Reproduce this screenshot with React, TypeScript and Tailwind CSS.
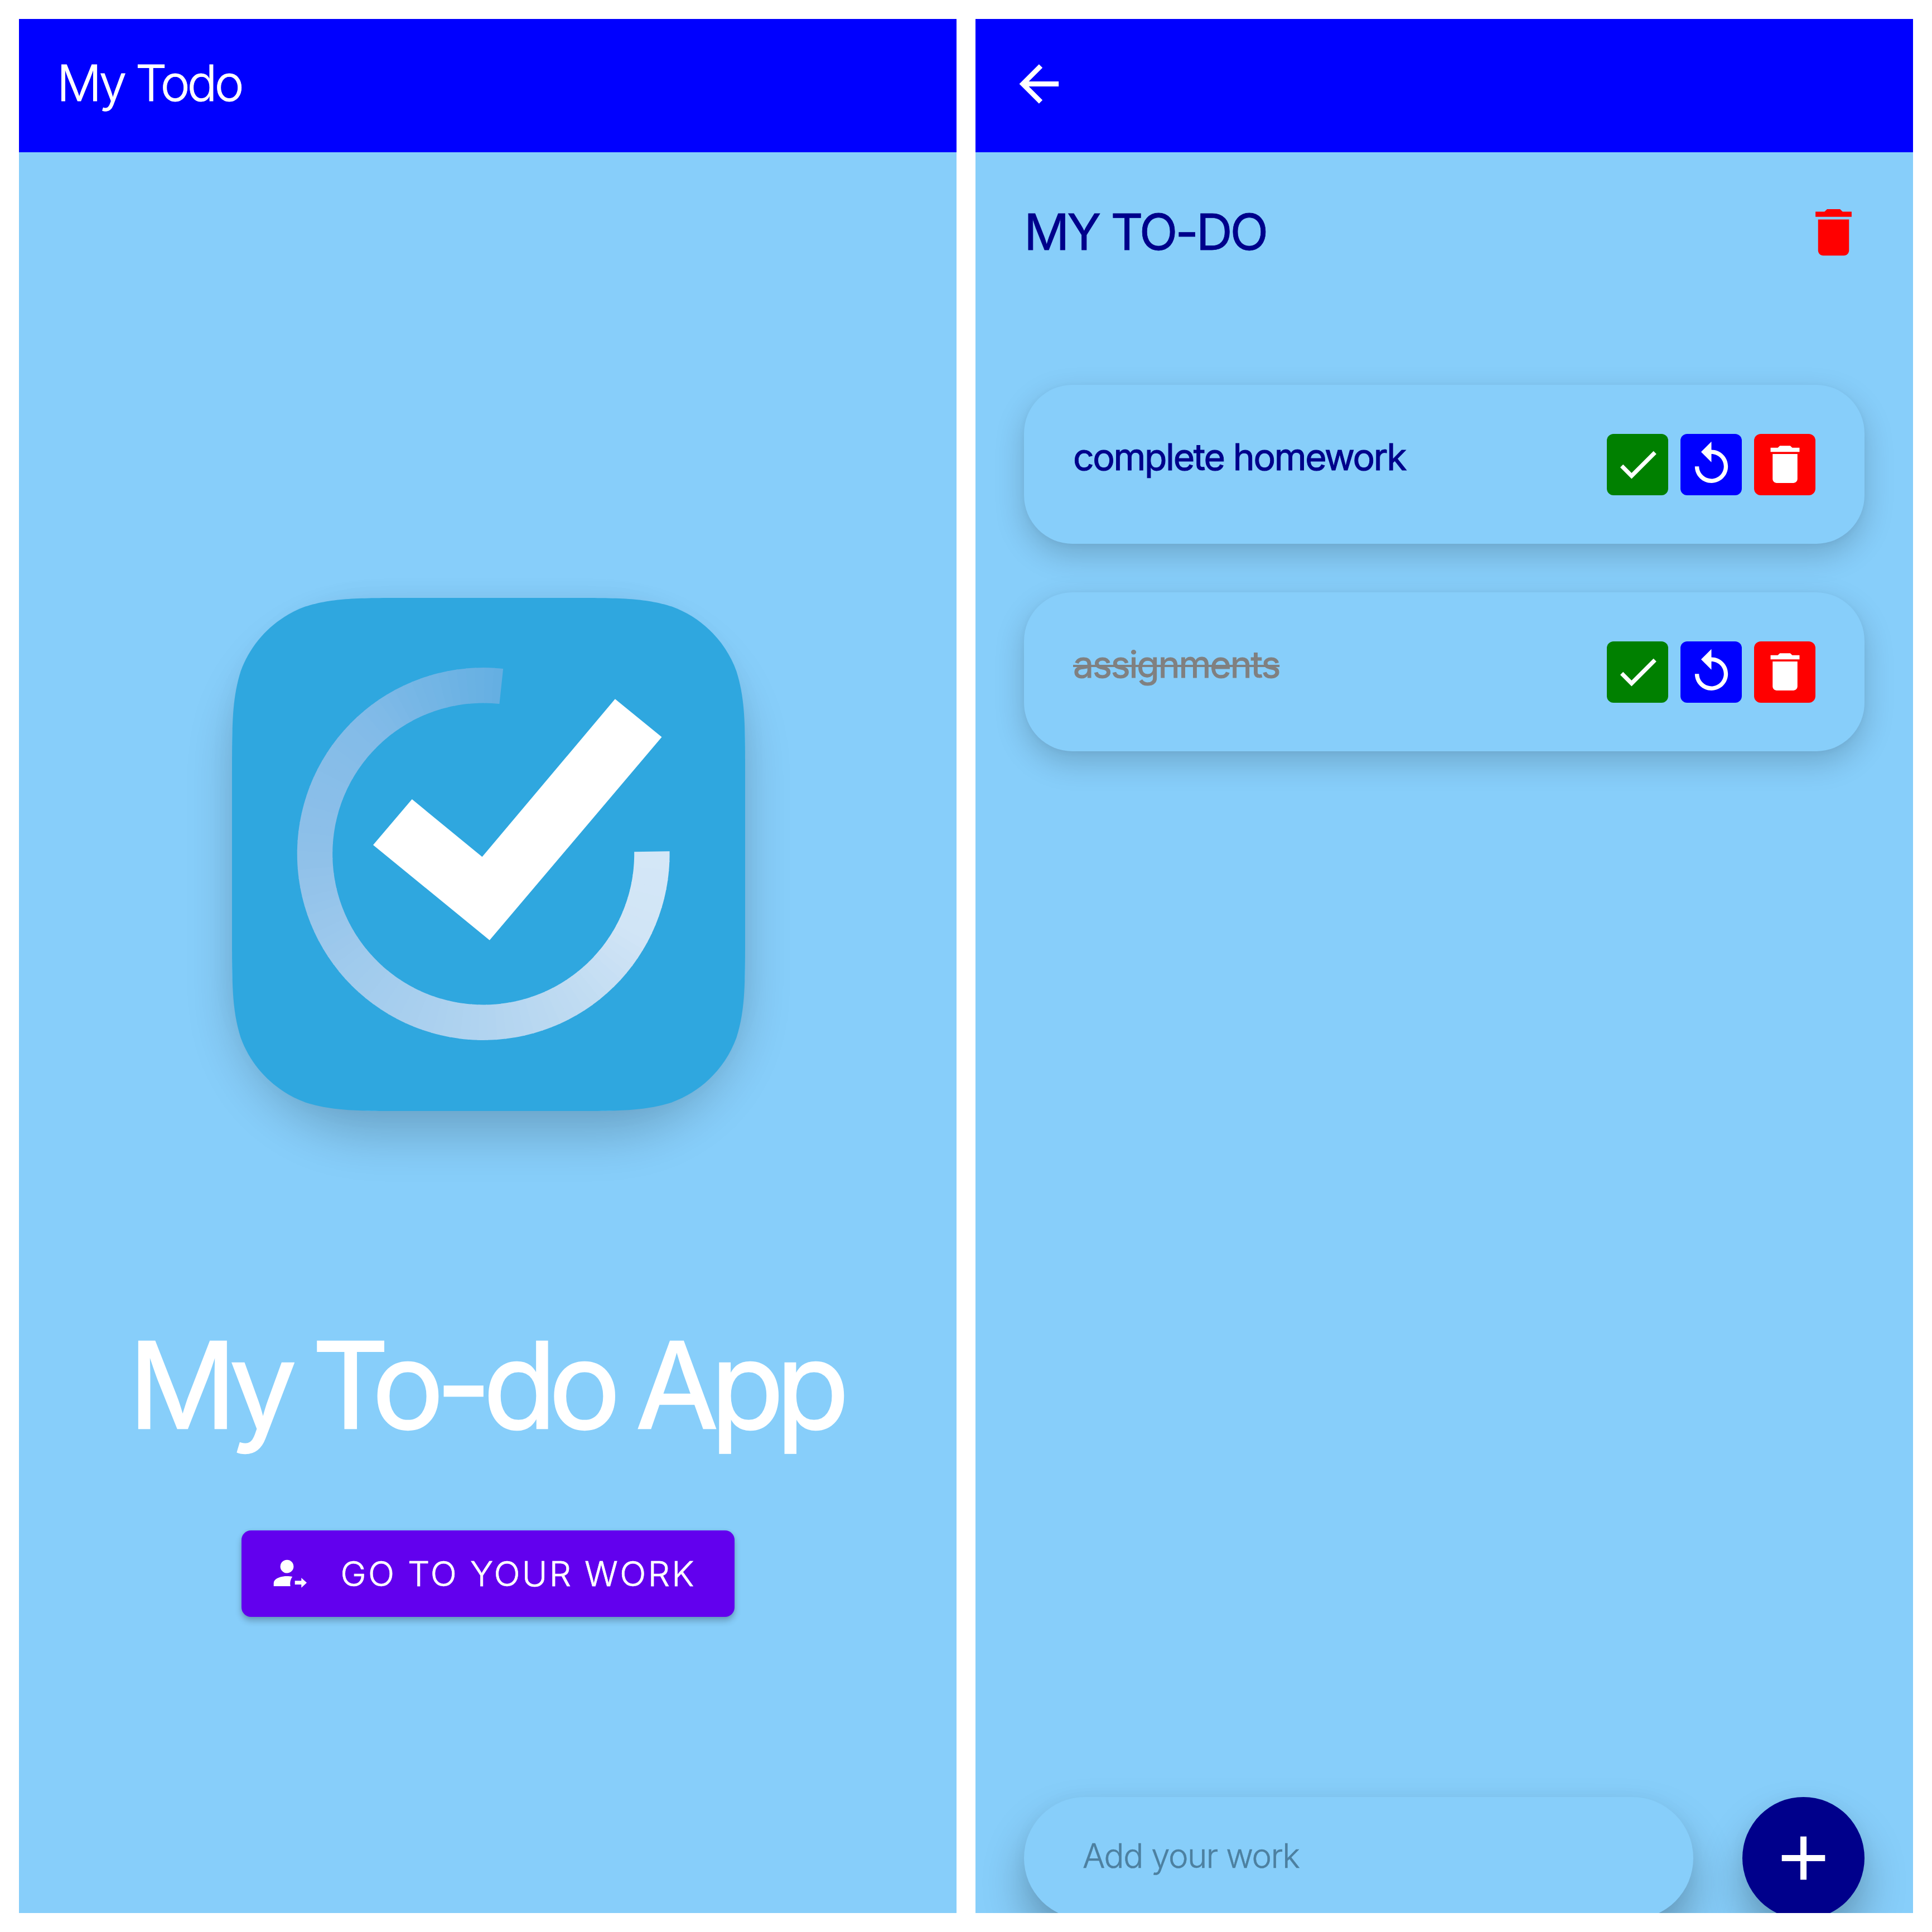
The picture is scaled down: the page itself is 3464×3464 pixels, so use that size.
import type { ReactNode } from "react";

const STOPS: [number, number[]][] = [
  [0, [212, 231, 247]],
  [0.1, [209, 229, 246]],
  [0.2, [193, 220, 242]],
  [0.32, [178, 212, 240]],
  [0.5, [161, 203, 237]],
  [0.66, [142, 192, 233]],
  [0.83, [130, 187, 232]],
  [1, [100, 175, 226]],
];

function colorAt(t: number) {
  const i = Math.max(1, STOPS.findIndex(([s]) => s >= t));
  const [t0, a] = STOPS[i - 1];
  const [t1, b] = STOPS[i];
  const k = (t - t0) / (t1 - t0);
  return `rgb(${a.map((v, n) => Math.round(v + (b[n] - v) * k)).join(",")})`;
}

/** Progress ring drawn clockwise from three o'clock, fading along the way. */
function Ring({ cx, cy, r, width }: { cx: number; cy: number; r: number; width: number }) {
  const from = -0.8;
  const to = 276.1;
  const count = 96;
  const step = (to - from) / count;
  const point = (deg: number) => {
    const a = (deg * Math.PI) / 180;
    return `${(cx + r * Math.cos(a)).toFixed(2)} ${(cy + r * Math.sin(a)).toFixed(2)}`;
  };
  return (
    <g fill="none" strokeWidth={width}>
      {Array.from({ length: count }, (_, i) => {
        const a = from + i * step;
        const b = Math.min(to, a + step + 0.4);
        return <path key={i} d={`M${point(a)}A${r} ${r} 0 0 1 ${point(b)}`} stroke={colorAt((i + 0.5) / count)} />;
      })}
    </g>
  );
}

function Logo() {
  return (
    <div className="ml-[3px] h-[920px] w-[920px] rounded-[255px] shadow-[0_46px_84px_rgba(0,0,0,0.18),0_0_50px_rgba(0,0,0,0.04)]">
      <svg viewBox="0 0 920 920" className="block h-full w-full">
        <path
          fill="#2fa7df"
          d="M318 0H602C694 0 739 0 788.6 15.6C842.4 35.2 884.8 77.6 904.4 131.4C920 181 920 226 920 318V602C920 694 920 739 904.4 788.6C884.8 842.4 842.4 884.8 788.6 904.4C739 920 694 920 602 920H318C226 920 181 920 131.4 904.4C77.6 884.8 35.2 842.4 15.6 788.6C0 739 0 694 0 602V318C0 226 0 181 15.6 131.4C35.2 77.6 77.6 35.2 131.4 15.6C181 0 226 0 318 0Z"
        />
        <Ring cx={450.7} cy={459} r={302.2} width={63.4} />
        <path fill="#fff" d="M322.7 361L448.5 464.3L686.8 181.3L770.5 249.5L461.8 613.8L253 443Z" />
      </svg>
    </div>
  );
}

function Icon({ d, className }: { d: string; className: string }) {
  return (
    <svg viewBox="0 0 24 24" fill="currentColor" className={className}>
      <path d={d} />
    </svg>
  );
}

const ARROW_LEFT = "M20 11v2H8l5.5 5.5-1.42 1.42L4.16 12l7.92-7.92L13.5 5.5 8 11h12z";
const TRASH = "M6 19c0 1.1.9 2 2 2h8c1.1 0 2-.9 2-2V7H6v12zM19 4h-3.5l-1-1h-5l-1 1H5v2h14V4z";
const CHECK = "M21 7L9 19l-5.5-5.5 1.41-1.41L9 16.17 19.59 5.59 21 7z";
const REPLAY =
  "M12 5V1L7 6l5 5V7c3.31 0 6 2.69 6 6s-2.69 6-6 6-6-2.69-6-6H4c0 4.42 3.58 8 8 8s8-3.58 8-8-3.58-8-8-8z";
const PLUS = "M19 13h-6v6h-2v-6H5v-2h6V5h2v6h6v2z";

function AccountArrow() {
  return (
    <svg viewBox="0 0 62 52" fill="#fff" className="mt-[1px] h-[52px] w-[62px] shrink-0">
      <circle cx="24.5" cy="12.7" r="11.9" />
      <path d="M.7 48V42.5C.7 34.5 13 30 24 30c4 0 7 .3 10.3 1C30.5 36 29.5 42 30.7 48z" />
      <path d="M38.7 38.3H50.3V33L60 41.7 50.3 50.7V45H38.7z" />
    </svg>
  );
}

function Screen({ header, children }: { header: ReactNode; children: ReactNode }) {
  return (
    <section className="flex h-[3396px] w-[1681px] flex-col overflow-hidden bg-[#87cefa]">
      <header className="flex h-[239px] shrink-0 items-center bg-[#0000ff] text-white">{header}</header>
      {children}
    </section>
  );
}

function ActionButton({ color, icon }: { color: string; icon: string }) {
  return (
    <button className={`flex h-[110px] w-[110px] items-center justify-center rounded-[12px] text-white ${color}`}>
      <Icon d={icon} className="h-[89px] w-[89px]" />
    </button>
  );
}

function TodoCard({ text, done = false }: { text: string; done?: boolean }) {
  return (
    <li className="flex h-[285px] items-center justify-between rounded-[87px] bg-[#87cefa] px-[88px] shadow-[0_20px_54px_rgba(0,0,0,0.18),0_2px_12px_rgba(0,0,0,0.04)]">
      <span
        className={`mb-[27px] text-[66px] leading-[80px] [-webkit-text-stroke:1px_currentColor] ${
          done
            ? "tracking-[-2.1px] text-[#808080] line-through decoration-[4px]"
            : "tracking-[-2.35px] text-[#00008b]"
        }`}
      >
        {text}
      </span>
      <div className="flex gap-[22px]">
        <ActionButton color="bg-[#008000]" icon={CHECK} />
        <ActionButton color="bg-[#0000ff]" icon={REPLAY} />
        <ActionButton color="bg-[#ff0000]" icon={TRASH} />
      </div>
    </li>
  );
}

export default function App() {
  return (
    <main className="flex h-[3464px] w-[3464px] gap-[34px] bg-white p-[34px] font-['Inter',sans-serif]">
      <Screen
        header={
          <span className="mb-[9px] ml-[68px] text-[89px] font-light leading-[110px] tracking-[-4.7px] [-webkit-text-stroke:1px_currentColor]">
            My Todo
          </span>
        }
      >
        <div className="flex flex-col items-center pt-[799px]">
          <Logo />
          <h1 className="mr-[10px] mt-[360px] whitespace-nowrap text-[215px] leading-[262px] tracking-[-14.2px] text-white [-webkit-text-stroke:2.5px_currentColor] [word-spacing:-5px]">
            My To-do App
          </h1>
          <button className="mt-[130px] flex h-[155px] w-[884px] items-center rounded-[17px] bg-[#6200ee] pl-[57px] text-white shadow-[0_7px_12px_rgba(0,0,0,0.24),0_0_6px_rgba(0,0,0,0.08)]">
            <AccountArrow />
            <span className="ml-[59px] whitespace-nowrap text-[62px] font-light leading-[80px] tracking-[3.3px] [-webkit-text-stroke:0.7px_currentColor]">
              GO TO YOUR WORK
            </span>
          </button>
        </div>
      </Screen>

      <Screen header={<Icon d={ARROW_LEFT} className="-mt-[7px] ml-[60px] h-[107px] w-[107px]" />}>
        <div className="flex grow flex-col px-[87px] pt-[88px]">
          <div className="flex h-[111px] items-center justify-between">
            <h2 className="mb-[2px] text-[90px] leading-[110px] tracking-[-4.1px] text-[#00008b] [-webkit-text-stroke:0.8px_currentColor]">
              MY TO-DO
            </h2>
            <Icon d={TRASH} className="h-[111px] w-[111px] text-[#ff0000]" />
          </div>
          <ul className="mt-[218px] flex flex-col gap-[87px]">
            <TodoCard text="complete homework" />
            <TodoCard text="assignments" done />
          </ul>
          <div className="-mb-[11px] mt-auto flex h-[219px] shrink-0 justify-between">
            <div className="flex w-[1200px] items-center rounded-full bg-[#87cefa] pl-[105px] shadow-[0_44px_76px_rgba(0,0,0,0.26),0_0_30px_rgba(0,0,0,0.03)]">
              <span className="mb-[9px] text-[60px] font-light leading-[80px] tracking-[-1.5px] text-[#4d80a0] [-webkit-text-stroke:0.5px_currentColor]">
                Add your work
              </span>
            </div>
            <button className="flex h-[219px] w-[219px] items-center justify-center rounded-full bg-[#00008b] text-white shadow-[0_44px_76px_rgba(0,0,0,0.26),0_0_30px_rgba(0,0,0,0.03)]">
              <Icon d={PLUS} className="h-[133px] w-[133px]" />
            </button>
          </div>
        </div>
      </Screen>
    </main>
  );
}
